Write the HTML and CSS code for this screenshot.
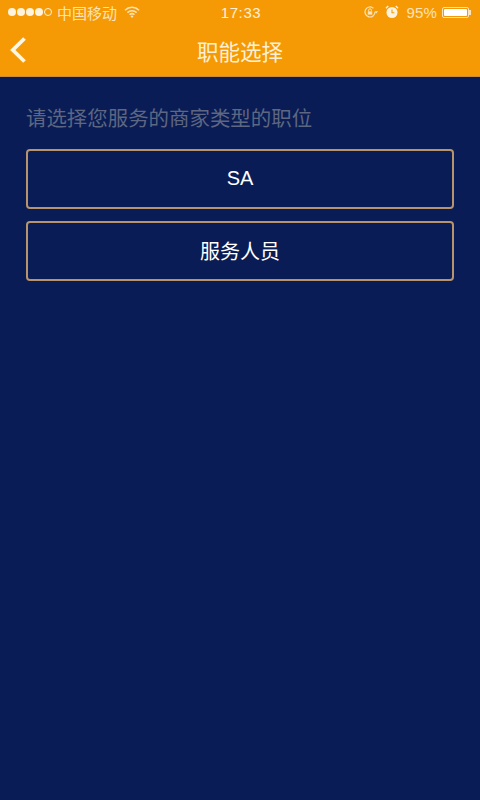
FILE: index.html
```html
<!DOCTYPE html>
<html lang="zh">
<head>
<meta charset="utf-8">
<title>职能选择</title>
<link rel="stylesheet" href="styles.css">
</head>
<body>
<header class="top">
  <div class="status">
    <div class="status-left">
      <span class="dots"><i></i><i></i><i></i><i></i><i class="hollow"></i></span>
      <span class="carrier">中国移动</span>
      <svg class="wifi" width="16" height="12" viewBox="0 0 16 12"><path d="M1 4.2a10 10 0 0 1 14 0M3.4 6.6a6.6 6.6 0 0 1 9.2 0M5.6 8.8a3.4 3.4 0 0 1 4.8 0" fill="none" stroke="#fde3b8" stroke-width="1.5"/><path d="M8 12l-1.5-1.7a2 2 0 0 1 3 0z" fill="#fde3b8"/></svg>
    </div>
    <span class="clock">17:33</span>
    <div class="status-right">
      <svg class="lock" width="16" height="14" viewBox="0 0 16 14"><path d="M12 7a5 5 0 1 1-1.6-3.7" fill="none" stroke="#fde3b8" stroke-width="1.2"/><path d="M11.5 6.2h3.6l-1.8 2.2z" fill="#fde3b8"/><rect x="4.8" y="6.4" width="4.4" height="3.2" fill="#fde3b8"/><path d="M5.6 6.4V5.2a1.4 1.4 0 0 1 2.8 0v1.2" fill="none" stroke="#fde3b8"/></svg>
      <svg class="alarm" width="14" height="14" viewBox="0 0 14 14"><circle cx="7" cy="7.5" r="5.5" fill="#fff3dd"/><path d="M7 4.5v3.3h2.4" fill="none" stroke="#f59a05" stroke-width="1.1"/><path d="M1 3.2L3.2 1M13 3.2L10.8 1" stroke="#fff3dd" stroke-width="1.4"/></svg>
      <span class="pct">95%</span>
      <span class="battery"><span class="level"></span></span><span class="nub"></span>
    </div>
  </div>
  <div class="nav">
    <svg class="back" width="18" height="28" viewBox="0 0 18 28"><path d="M15.5 2.5L3.8 14l11.7 11.5" fill="none" stroke="#fff6e6" stroke-width="3.8"/></svg>
    <h1 class="title">职能选择</h1>
  </div>
</header>
<main class="content">
  <p class="hint">请选择您服务的商家类型的职位</p>
  <div class="options">
    <button class="option" type="button">SA</button>
    <button class="option" type="button">服务人员</button>
  </div>
</main>
</body>
</html>
```
FILE: styles.css
```css
* { box-sizing: border-box; }
html, body { margin: 0; height: 100%; }
body {
  width: 480px;
  height: 800px;
  overflow: hidden;
  background: #0a1c55;
  font-family: "Liberation Sans", "Noto Sans CJK SC", sans-serif;
}
.top {
  height: 77px;
  background: #f59a05;
  border-bottom: 1px solid #c98a3a;
}
.status {
  height: 24px;
  padding: 0 9px 0 8px;
  display: flex;
  align-items: center;
  color: #fde3b8;
  font-size: 15px;
}
.status-left, .status-right { display: flex; align-items: center; }
.status-left { flex: 1; }
.dots { display: flex; gap: 1px; margin-right: 5px; }
.dots i { width: 8px; height: 8px; border-radius: 50%; background: #fff3dd; }
.dots i.hollow { background: none; border: 1px solid #fff3dd; }
.carrier { margin-right: 7px; font-size: 15px; }
.clock { flex: 0 0 auto; margin-left: 3px; color: #fff0d6; font-size: 15px; letter-spacing: 0.6px; }
.status-right { flex: 1; justify-content: flex-end; }
.lock { margin-right: 6px; }
.alarm { margin-right: 7px; }
.pct { margin-right: 5px; letter-spacing: 0.2px; }
.battery {
  width: 27px;
  height: 11px;
  border: 1px solid #fde3b8;
  border-radius: 2px;
  padding: 1px;
  display: flex;
}
.level { flex: 1; background: #fff; border-radius: 1px; }
.nub { width: 2px; height: 5px; background: #fde3b8; }
.nav {
  height: 52px;
  display: flex;
  align-items: center;
  justify-content: center;
  position: relative;
}
.back { position: absolute; left: 9px; top: 12px; }
.title {
  margin: 0;
  font-size: 21.5px;
  font-weight: 400;
  color: #fdf0d8;
}
.content { padding: 27px 26px 0; }
.hint {
  margin: 0 0 16px;
  font-size: 20.45px;
  line-height: 29px;
  color: #5d6782;
}
.options { display: flex; flex-direction: column; gap: 12px; }
.option {
  height: 60px;
  width: 100%;
  padding: 0 0 2px;
  background: transparent;
  border: 2px solid #b8946c;
  border-radius: 4px;
  color: #fff;
  font: inherit;
  font-size: 20px;
}
```
